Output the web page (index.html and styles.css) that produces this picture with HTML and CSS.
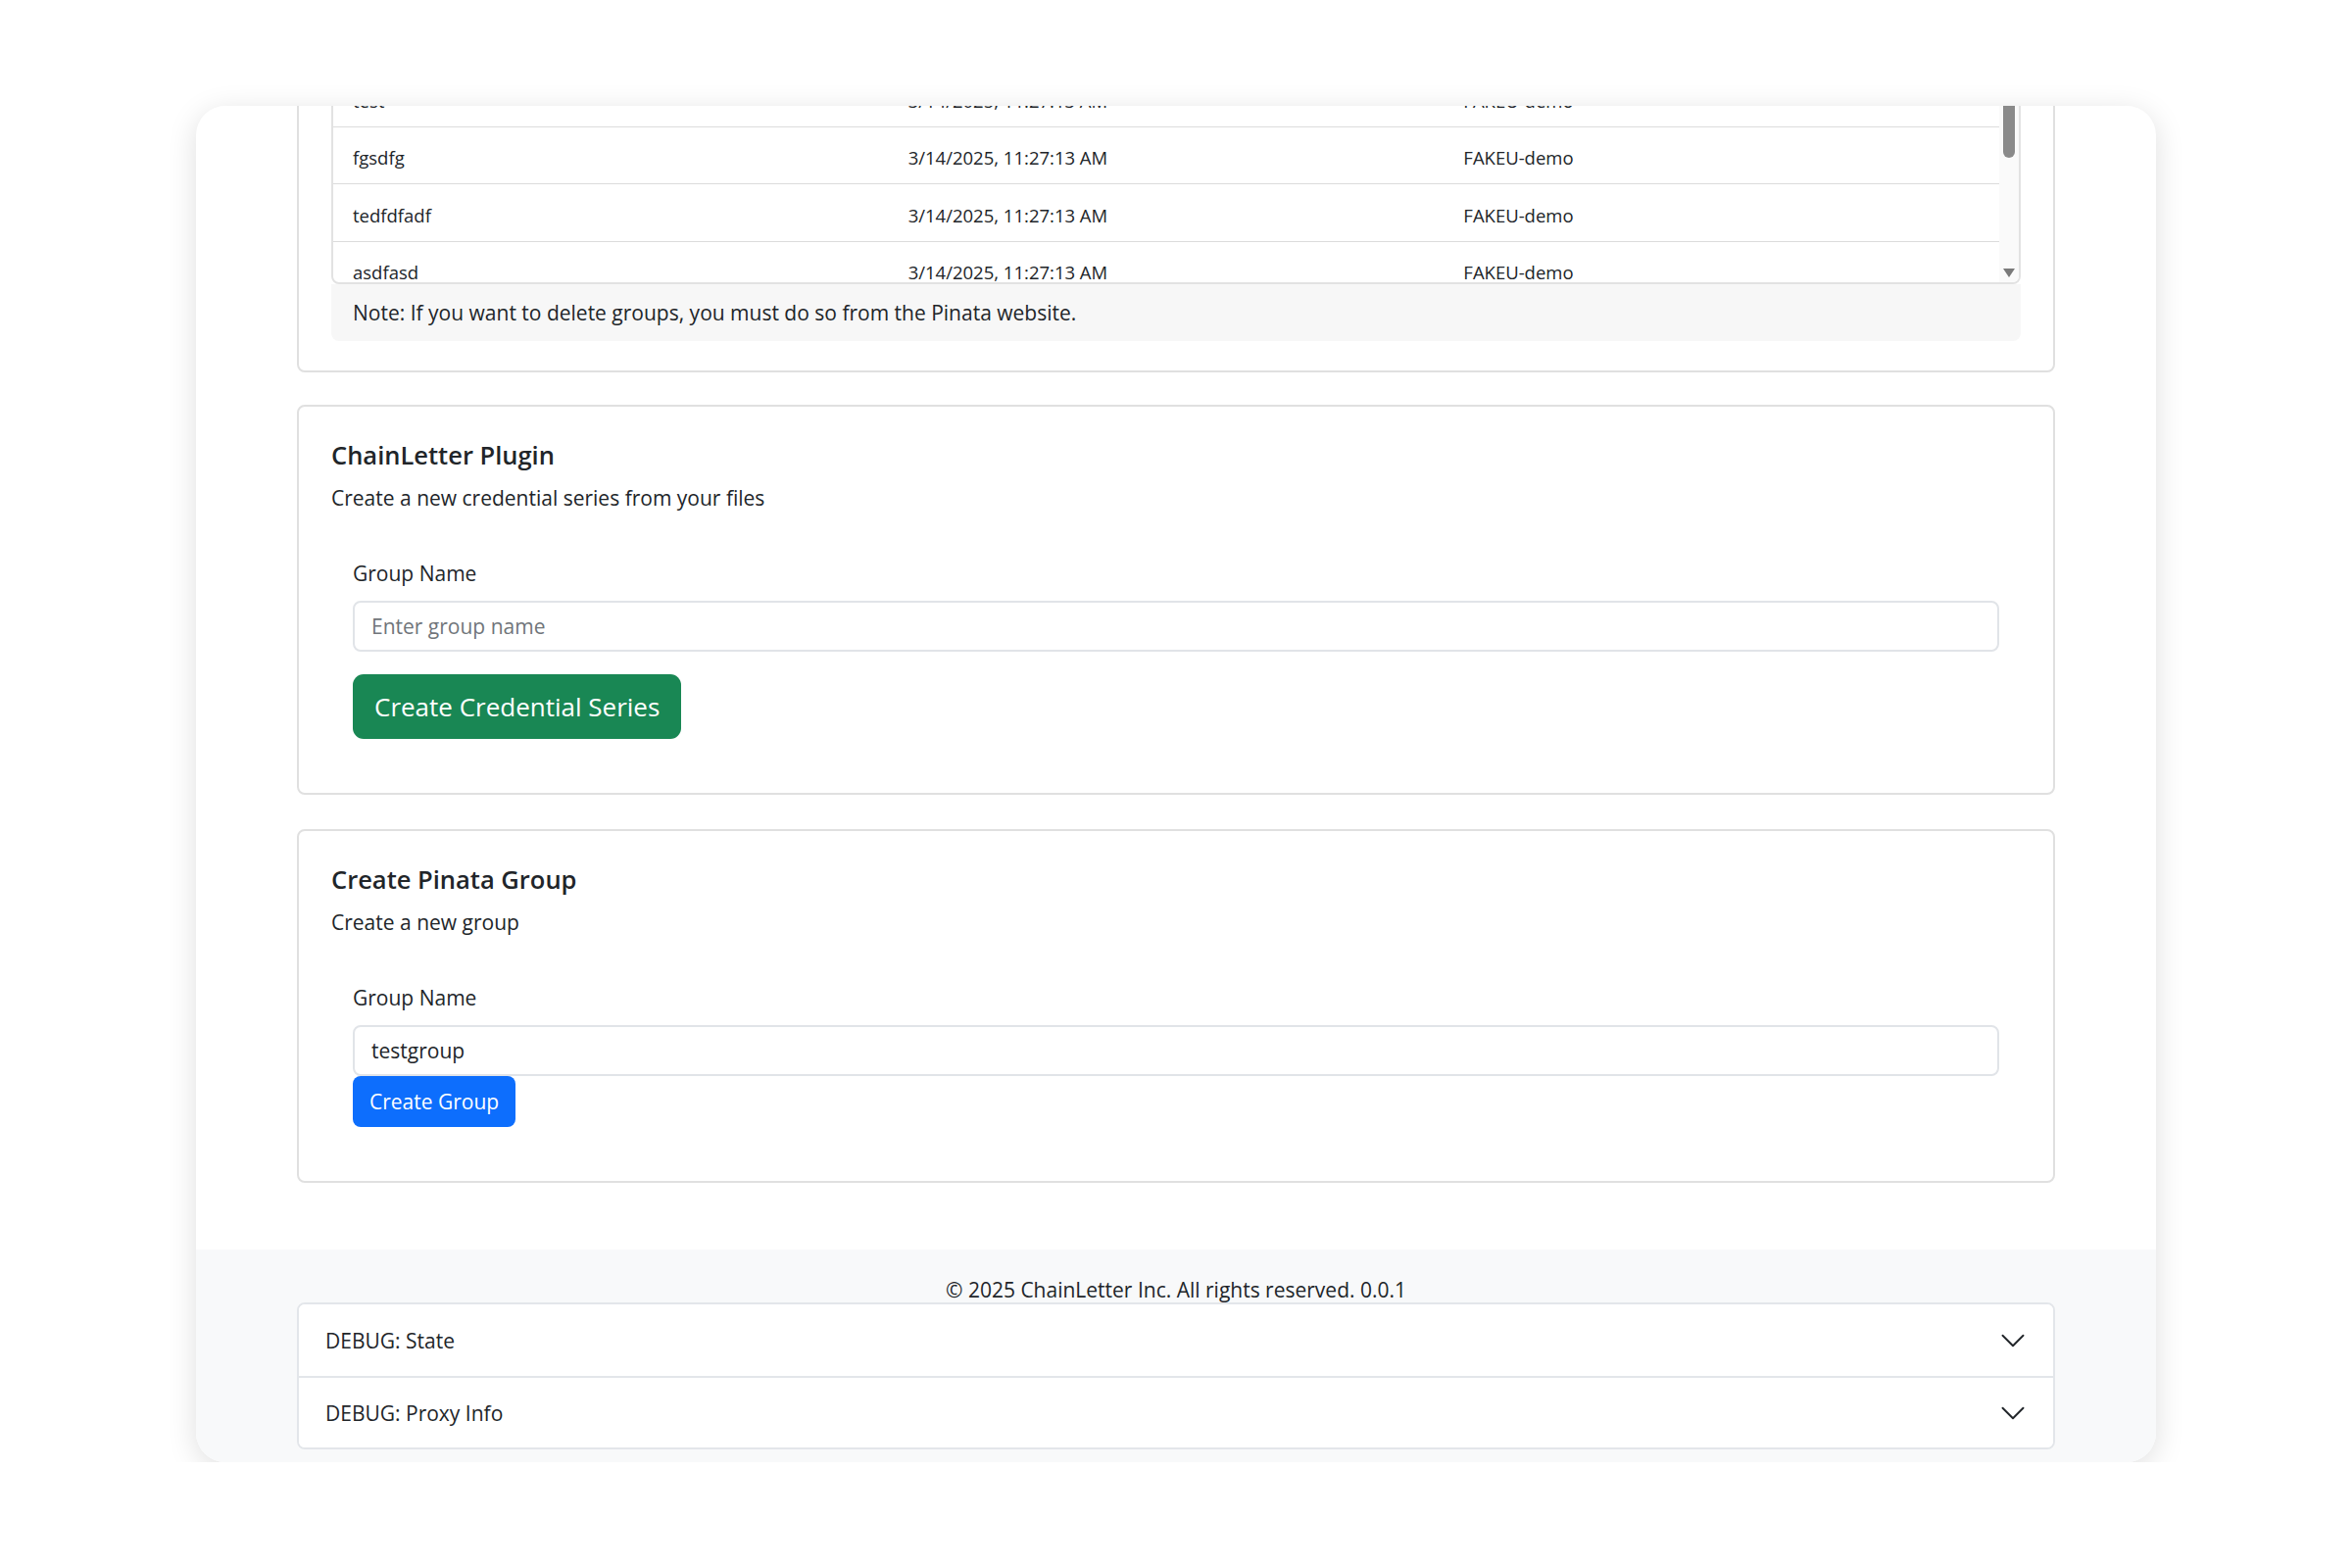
FILE: index.html
```html
<!DOCTYPE html>
<html>
<head>
    <title>ChainLetter Plugin</title>
    <link rel="stylesheet" href="styles.css">
</head>
<body>
    <div class="window">
        <div class="main">
            <section class="card card-groups">
                <div class="card-body">
                    <div class="groups">
                        <div class="groups-rows">
                            <div class="g-row"><span>test</span><span>3/14/2025, 11:27:13 AM</span><span>FAKEU-demo</span></div>
                            <div class="g-row"><span>fgsdfg</span><span>3/14/2025, 11:27:13 AM</span><span>FAKEU-demo</span></div>
                            <div class="g-row"><span>tedfdfadf</span><span>3/14/2025, 11:27:13 AM</span><span>FAKEU-demo</span></div>
                            <div class="g-row"><span>asdfasd</span><span>3/14/2025, 11:27:13 AM</span><span>FAKEU-demo</span></div>
                        </div>
                        <div class="scrollbar">
                            <div class="thumb"></div>
                            <div class="arrow"></div>
                        </div>
                    </div>
                    <div class="note">Note: If you want to delete groups, you must do so from the Pinata website.</div>
                </div>
            </section>

            <section class="card">
                <div class="card-body">
                    <h5 class="card-title">ChainLetter Plugin</h5>
                    <p class="card-text">Create a new credential series from your files</p>
                    <form class="form-box">
                        <label class="label" for="series-name">Group Name</label>
                        <input class="input" id="series-name" type="text" placeholder="Enter group name">
                        <button class="btn btn-green" type="button">Create Credential Series</button>
                    </form>
                </div>
            </section>

            <section class="card">
                <div class="card-body">
                    <h5 class="card-title">Create Pinata Group</h5>
                    <p class="card-text">Create a new group</p>
                    <form class="form-box">
                        <label class="label" for="group-name">Group Name</label>
                        <input class="input" id="group-name" type="text" value="testgroup">
                        <button class="btn btn-blue" type="button">Create Group</button>
                    </form>
                </div>
            </section>
        </div>

        <footer class="footer">
            <p class="copy">© 2025 ChainLetter Inc. All rights reserved. 0.0.1</p>
            <div class="accordion">
                <button class="acc-btn" type="button">
                    <span>DEBUG: State</span>
                    <svg class="chevron" viewBox="0 0 16 16" fill="none" stroke="#212529" stroke-width="1.1" stroke-linecap="round" stroke-linejoin="round"><path d="M2 5L8 11L14 5"/></svg>
                </button>
                <button class="acc-btn" type="button">
                    <span>DEBUG: Proxy Info</span>
                    <svg class="chevron" viewBox="0 0 16 16" fill="none" stroke="#212529" stroke-width="1.1" stroke-linecap="round" stroke-linejoin="round"><path d="M2 5L8 11L14 5"/></svg>
                </button>
            </div>
        </footer>
    </div>
</body>
</html>
```

FILE: styles.css
```css
body {
    margin: 0;
    padding: 0;
    background-color: #fff;
    color: #212529;
    font-family: 'Open Sans', 'Noto Sans', sans-serif;
    font-size: 21px;
}

.window {
    width: 2000px;
    height: 1384px;
    margin: 108px auto 0;
    border-radius: 30px;
    overflow: hidden;
    background-color: #fff;
    box-shadow: 0 6px 30px rgba(0, 0, 0, 0.13);
    display: flex;
    flex-direction: column;
}

/* page is scrolled down, the top of the first card is out of view */
.main {
    margin-top: -74px;
    padding: 0 103px 68px;
}

.card {
    border: 2px solid #e0e0e0;
    border-radius: 8px;
    margin-bottom: 35px;
}

.card:last-child {
    margin-bottom: 0;
}

.card-body {
    padding: 33px;
}

.card-groups {
    margin-bottom: 33px;
}

.card-groups .card-body {
    padding-bottom: 30px;
}

.groups {
    display: flex;
    height: 221px;
    box-sizing: border-box;
    border: 2px solid #e2e2e2;
    border-radius: 8px;
    overflow: hidden;
    font-size: 18.5px;
}

.groups-rows {
    flex: 1;
}

.g-row {
    display: grid;
    grid-template-columns: 1fr 1fr 1fr;
    align-items: center;
    height: 58.5px;
    box-sizing: border-box;
    padding-top: 5px;
    border-bottom: 1px solid #dcdcdc;
}

.g-row span {
    padding-left: 20px;
}

.scrollbar {
    width: 20px;
    background-color: #fafafa;
    display: flex;
    flex-direction: column;
    align-items: center;
}

.thumb {
    width: 12px;
    height: 90px;
    border-radius: 0 0 6px 6px;
    background-color: #8a8a8a;
}

.arrow {
    margin-top: auto;
    margin-bottom: 5px;
    width: 0;
    height: 0;
    border-left: 6px solid transparent;
    border-right: 6px solid transparent;
    border-top: 9px solid #7a7a7a;
}

.note {
    height: 58px;
    line-height: 58px;
    padding: 0 22px;
    background-color: #f7f7f7;
    border-radius: 0 0 8px 8px;
}

.card-title {
    margin: 0 0 11px;
    font-size: 25.5px;
    font-weight: 600;
    line-height: 33px;
}

.card-text {
    margin: 0 0 22px;
    line-height: 33px;
}

.form-box {
    display: flex;
    flex-direction: column;
    align-items: flex-start;
    padding: 22px;
}

.label {
    line-height: 33px;
    margin-bottom: 11px;
}

.input {
    width: 100%;
    height: 52px;
    box-sizing: border-box;
    padding: 0 17px;
    border: 2px solid #e1e4e8;
    border-radius: 8px;
    font-family: inherit;
    font-size: 21px;
    color: #212529;
}

.input::placeholder {
    color: #70757a;
}

.btn {
    border: none;
    color: #fff;
    font-family: inherit;
    cursor: pointer;
}

.btn-green {
    margin-top: 23px;
    height: 66px;
    padding: 0 22px;
    border-radius: 11px;
    background-color: #198754;
    font-size: 26px;
}

.btn-blue {
    height: 52px;
    padding: 0 17px;
    border-radius: 8px;
    background-color: #0d6efd;
    font-size: 21px;
}

.footer {
    flex: 1;
    background-color: #f8f9fa;
    padding: 28px 103px 0;
}

.copy {
    margin: 0;
    text-align: center;
    line-height: 26px;
}

.accordion {
    border: 2px solid #e3e6ea;
    border-radius: 8px;
    background-color: #fff;
    overflow: hidden;
}

.acc-btn {
    display: flex;
    align-items: center;
    justify-content: space-between;
    width: 100%;
    height: 73px;
    padding: 0 27px;
    border: none;
    background-color: #fff;
    font-family: inherit;
    font-size: 21px;
    color: #212529;
    text-align: left;
}

.acc-btn + .acc-btn {
    border-top: 2px solid #e3e6ea;
}

.chevron {
    width: 28px;
    height: 28px;
}
```
